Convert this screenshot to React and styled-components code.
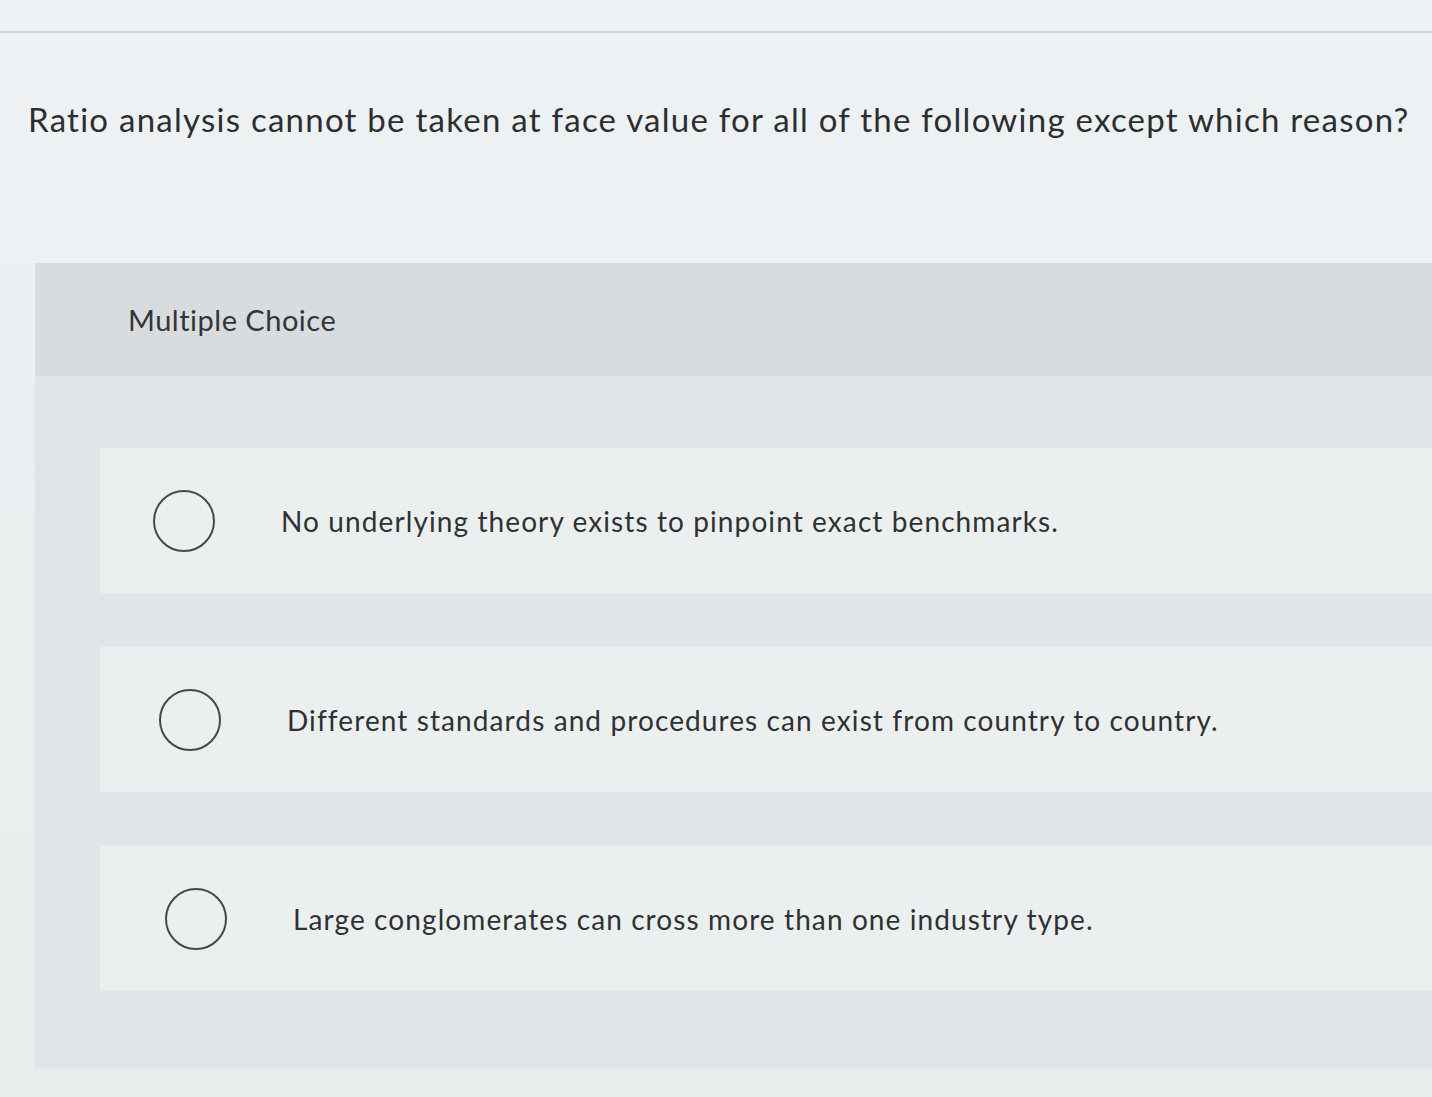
import React from 'react';
import styled, { createGlobalStyle } from 'styled-components';

const GlobalStyle = createGlobalStyle`
  html, body {
    margin: 0;
    padding: 0;
    background: #eef1f3;
    font-family: Lato, "Open Sans", "Liberation Sans", sans-serif;
    color: #2f3133;
  }
`;

const Page = styled.div`
  width: 1432px;
  min-height: 1097px;
  overflow: hidden;
  background: linear-gradient(180deg, #eff2f4 0%, #e9eced 100%);
`;

const TopRule = styled.div`
  height: 2px;
  margin-top: 31px;
  background: #d2d5d8;
`;

const Question = styled.h1`
  margin: 64px 0 0 28px;
  font-size: 33px;
  font-weight: 400;
  letter-spacing: 1.25px;
  line-height: 44px;
  white-space: nowrap;
  color: #2c2e30;
`;

const Panel = styled.section`
  margin: 122px 0 0 35px;
  background: #e2e5e7;
  padding-bottom: 78px;
`;

const PanelHeader = styled.div`
  height: 113px;
  display: flex;
  align-items: center;
  padding-left: 93px;
  background: #d9dcdf;
  font-size: 29px;
  letter-spacing: 0.5px;
  color: #333537;
`;

const Options = styled.div`
  display: flex;
  flex-direction: column;
  gap: 54px;
  padding: 72px 0 0 65px;
`;

const Option = styled.label`
  height: 145px;
  display: flex;
  align-items: center;
  gap: 66px;
  padding-left: ${p => 53 + p.$shift}px;
  background: #eceff0;
  font-size: 28px;
  letter-spacing: 1.1px;
  color: #2f3133;
  cursor: pointer;
`;

const Radio = styled.span`
  width: 58px;
  height: 58px;
  flex: none;
  border: 2px solid #45474a;
  border-radius: 50%;
`;

const options = [
  'No underlying theory exists to pinpoint exact benchmarks.',
  'Different standards and procedures can exist from country to country.',
  'Large conglomerates can cross more than one industry type.',
];

const App = () => {
  return (
    <Page>
      <GlobalStyle />
      <TopRule />
      <Question>Ratio analysis cannot be taken at face value for all of the following except which reason?</Question>
      <Panel>
        <PanelHeader>Multiple Choice</PanelHeader>
        <Options>
          {options.map((text, i) => (
            <Option key={i} $shift={i * 6}>
              <Radio />
              {text}
            </Option>
          ))}
        </Options>
      </Panel>
    </Page>
  );
};

export default App;
